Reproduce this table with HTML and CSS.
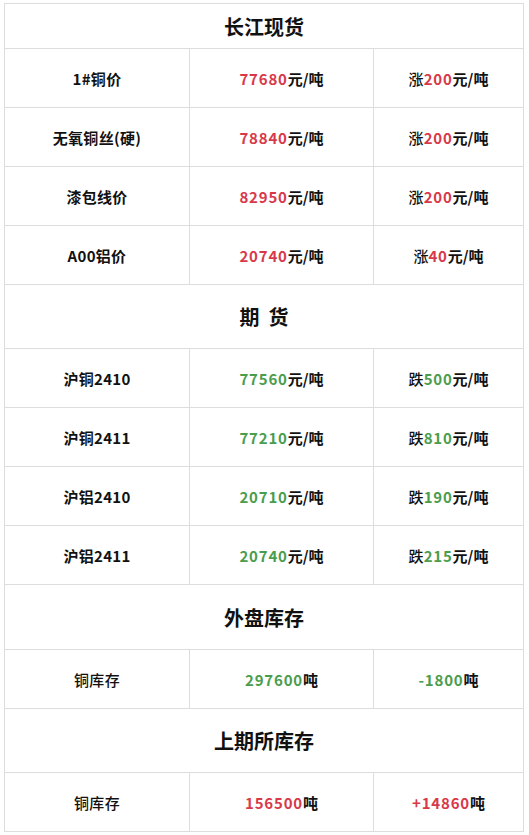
FILE: index.html
```html
<!DOCTYPE html>
<html lang="zh-CN">
<head>
<meta charset="utf-8">
<title>行情</title>
<link rel="stylesheet" href="styles.css">
</head>
<body>
<table class="quote">
  <colgroup>
    <col class="c1"><col class="c2"><col class="c3">
  </colgroup>
  <tr class="head first"><th colspan="3">长江现货</th></tr>
  <tr><td class="label">1#铜价</td><td><span class="up">77680</span>元/吨</td><td><span class="word">涨</span><span class="up">200</span>元/吨</td></tr>
  <tr><td class="label">无氧铜丝(硬)</td><td><span class="up">78840</span>元/吨</td><td><span class="word">涨</span><span class="up">200</span>元/吨</td></tr>
  <tr><td class="label">漆包线价</td><td><span class="up">82950</span>元/吨</td><td><span class="word">涨</span><span class="up">200</span>元/吨</td></tr>
  <tr><td class="label">A00铝价</td><td><span class="up">20740</span>元/吨</td><td><span class="word">涨</span><span class="up">40</span>元/吨</td></tr>
  <tr class="head"><th colspan="3">期&nbsp;&nbsp;货</th></tr>
  <tr><td class="label">沪铜2410</td><td><span class="down">77560</span>元/吨</td><td><span class="word">跌</span><span class="down">500</span>元/吨</td></tr>
  <tr><td class="label">沪铜2411</td><td><span class="down">77210</span>元/吨</td><td><span class="word">跌</span><span class="down">810</span>元/吨</td></tr>
  <tr><td class="label">沪铝2410</td><td><span class="down">20710</span>元/吨</td><td><span class="word">跌</span><span class="down">190</span>元/吨</td></tr>
  <tr><td class="label">沪铝2411</td><td><span class="down">20740</span>元/吨</td><td><span class="word">跌</span><span class="down">215</span>元/吨</td></tr>
  <tr class="head tall"><th colspan="3">外盘库存</th></tr>
  <tr><td class="label plain">铜库存</td><td><span class="down">297600</span>吨</td><td><span class="down">-1800</span>吨</td></tr>
  <tr class="head"><th colspan="3">上期所库存</th></tr>
  <tr><td class="label plain">铜库存</td><td><span class="up">156500</span>吨</td><td><span class="up">+14860</span>吨</td></tr>
</table>
</body>
</html>
```
FILE: styles.css
```css
html, body {
  background: #ffffff;
}
body {
  margin: 3px 0 0 4px;
  font-family: "Noto Sans CJK SC", "Noto Sans", sans-serif;
  color: #111111;
}
.quote {
  border-collapse: collapse;
  table-layout: fixed;
  width: 519px;
}
.c1 { width: 185px; }
.c2 { width: 184px; }
.c3 { width: 150px; }
.quote th,
.quote td {
  border: 1px solid #dddddd;
  text-align: center;
  padding: 0;
}
.quote th {
  height: 63px;
  font-size: 20px;
  font-weight: 700;
  color: #111111;
}
.quote tr.first th {
  height: 44px;
}
.quote tr.tall th {
  height: 64px;
}
.quote td {
  height: 58px;
  font-size: 15px;
  font-weight: 700;
}
.quote td.label {
  letter-spacing: 0.3px;
}
.quote td.plain {
  font-weight: 500;
}
.word {
  font-weight: 500;
}
.up,
.down {
  letter-spacing: 0.8px;
}
.up {
  color: #d8394a;
}
.down {
  color: #4a9d4c;
}
```
